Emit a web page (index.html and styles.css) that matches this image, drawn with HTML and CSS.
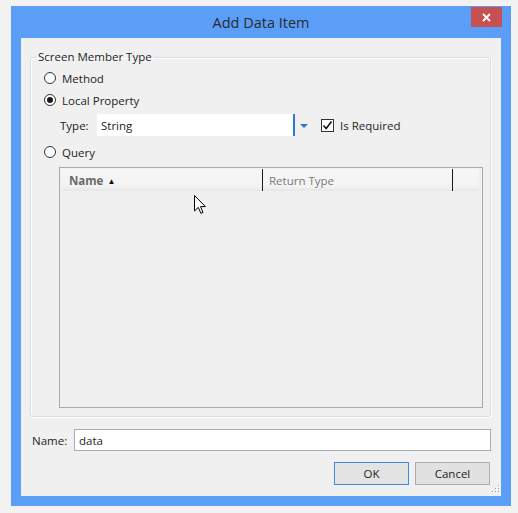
FILE: index.html
```html
<!DOCTYPE html>
<html lang="en">
<head>
  <meta charset="UTF-8">
  <title>Add Data Item</title>
  <link rel="stylesheet" href="styles.css">
</head>
<body>
  <div class="window">
    <div class="titlebar">
      <span class="title">Add Data Item</span>
      <div class="close">
        <svg width="9" height="9" viewBox="0 0 9 9"><path d="M1 1 L8 8 M8 1 L1 8" stroke="#fff" stroke-width="1.8"/></svg>
      </div>
    </div>

    <div class="client">
      <fieldset class="group">
        <legend>Screen Member Type</legend>

        <div class="radio-row"><span class="radio"></span>Method</div>
        <div class="radio-row"><span class="radio checked"></span>Local Property</div>

        <div class="type-row">
          <span class="type-label">Type:</span>
          <div class="combo">
            <span class="combo-text">String</span>
            <span class="combo-btn">
              <svg width="8" height="4" viewBox="0 0 8 4"><path d="M0 0 L8 0 L4 4 Z" fill="#2a7ad0"/></svg>
            </span>
          </div>
          <span class="check">
            <svg width="11" height="11" viewBox="0 0 11 11"><path d="M1.5 5.5 L4.2 8.5 L9.5 1.5" fill="none" stroke="#111" stroke-width="1.6"/></svg>
          </span>
          <span>Is Required</span>
        </div>

        <div class="radio-row"><span class="radio"></span>Query</div>

        <div class="list">
          <div class="list-header">
            <div class="col col-name">Name <span class="sort">&#9650;</span></div>
            <div class="col col-type">Return Type</div>
          </div>
          <div class="list-body"></div>
          <!-- mouse pointer left in the shot -->
          <svg class="cursor" width="12" height="19" viewBox="0 0 12 19">
            <path d="M0.5 0.5 L0.5 16 L4.3 12.4 L6.9 18.3 L9 17.4 L6.5 11.6 L11.4 11.6 Z" fill="#fff" stroke="#000" stroke-width="1"/>
          </svg>
        </div>
      </fieldset>

      <div class="name-row">
        <span class="name-label">Name:</span>
        <div class="textbox">data</div>
      </div>

      <div class="buttons">
        <div class="btn btn-default">OK</div>
        <div class="btn">Cancel</div>
      </div>

      <svg class="grip" width="10" height="10" viewBox="0 0 10 10">
        <rect x="8" y="0" width="1" height="1" fill="#9a9a9a"/>
        <rect x="5" y="3" width="1" height="1" fill="#9a9a9a"/>
        <rect x="8" y="3" width="1" height="1" fill="#9a9a9a"/>
        <rect x="2" y="6" width="1" height="1" fill="#9a9a9a"/>
        <rect x="5" y="6" width="1" height="1" fill="#9a9a9a"/>
        <rect x="8" y="6" width="1" height="1" fill="#9a9a9a"/>
        <rect x="9" y="1" width="1" height="1" fill="#fff"/>
        <rect x="6" y="4" width="1" height="1" fill="#fff"/>
        <rect x="9" y="4" width="1" height="1" fill="#fff"/>
        <rect x="3" y="7" width="1" height="1" fill="#fff"/>
        <rect x="6" y="7" width="1" height="1" fill="#fff"/>
        <rect x="9" y="7" width="1" height="1" fill="#fff"/>
      </svg>
    </div>
  </div>
</body>
</html>
```

FILE: styles.css
```css
body {
  margin: 0;
  padding: 6px 0 0 11px;
  background: #f2f2f2;
  font-family: "Open Sans", "Noto Sans", sans-serif;
  font-size: 11.5px;
  color: #1e1e1e;
}
.window {
  width: 500px;
  height: 500px;
  box-sizing: border-box;
  background: #5b9ef8;
  padding: 0 10px 10px;
  display: flex;
  flex-direction: column;
}
.titlebar {
  position: relative;
  height: 32px;
  display: flex;
  align-items: center;
  justify-content: center;
}
.title {
  font-size: 14.5px;
  color: #2b2b2b;
}
.close {
  position: absolute;
  top: 1px;
  right: -1px;
  width: 31px;
  height: 20px;
  background: #c75050;
  display: flex;
  align-items: center;
  justify-content: center;
}
.client {
  position: relative;
  flex: 1;
  background: #f0f0f0;
  padding: 11px 0 0;
  display: flex;
  flex-direction: column;
}
.group {
  margin: 0 10px 0 9px;
  padding: 2px 7px 8px 0;
  border: 1px solid #d5dfe5;
  border-radius: 3px;
  box-shadow: inset 1px 1px 0 #fff, 1px 1px 0 #fff;
  min-width: 0;
}
.group legend {
  margin-left: 5px;
  padding: 0 2px;
  line-height: 16px;
}
.radio-row {
  height: 22px;
  display: flex;
  align-items: center;
  padding-left: 13px;
  gap: 6px;
}
.radio {
  width: 10px;
  height: 10px;
  border: 1px solid #333;
  border-radius: 50%;
  background: #fff;
  display: flex;
  align-items: center;
  justify-content: center;
}
.radio.checked::after {
  content: "";
  width: 6px;
  height: 6px;
  border-radius: 50%;
  background: #1a1a1a;
}
.type-row {
  display: flex;
  align-items: center;
  height: 22px;
  margin: 3px 0 5px;
  padding-left: 29px;
}
.type-label {
  width: 37px;
}
.combo {
  display: flex;
  height: 22px;
}
.combo-text {
  width: 192px;
  background: #fff;
  border-right: 2px solid #2a7ad0;
  padding-left: 4px;
  display: flex;
  align-items: center;
}
.combo-btn {
  width: 17px;
  display: flex;
  align-items: center;
  justify-content: center;
  padding-top: 1px;
}
.check {
  width: 11px;
  height: 11px;
  margin: 0 6px 0 9px;
  border: 1px solid #333;
  background: #fff;
  display: flex;
}
.list {
  position: relative;
  margin: 4px 0 0 28px;
  height: 241px;
  box-sizing: border-box;
  border: 1px solid #a9a9a9;
  padding: 1px 3px 0 1px;
  display: flex;
  flex-direction: column;
}
.list-header {
  display: flex;
  height: 22px;
  background: linear-gradient(#f7f7f7, #f3f3f3 80%, #e6e6e6);
}
.col {
  display: flex;
  align-items: center;
  border-right: 1px solid #1a1a1a;
  color: #7a7a7a;
}
.col-name {
  width: 193px;
  padding-left: 8px;
  font-weight: bold;
  color: #6a6a6a;
}
.col-name .sort {
  font-size: 8px;
  margin-left: 4px;
  color: #111;
}
.col-type {
  width: 183px;
  padding-left: 6px;
}
.list-body {
  flex: 1;
}
.cursor {
  position: absolute;
  left: 134px;
  top: 27px;
}
.name-row {
  display: flex;
  align-items: center;
  margin: 12px 10px 0 11px;
}
.name-label {
  width: 42px;
}
.textbox {
  flex: 1;
  height: 22px;
  box-sizing: border-box;
  border: 1px solid #abadb3;
  background: #fff;
  padding-left: 4px;
  display: flex;
  align-items: center;
}
.buttons {
  display: flex;
  justify-content: flex-end;
  gap: 6px;
  margin: 11px 11px 0 0;
}
.btn {
  width: 75px;
  height: 23px;
  box-sizing: border-box;
  border: 1px solid #adadad;
  background: #e1e1e1;
  display: flex;
  align-items: center;
  justify-content: center;
}
.btn-default {
  border-color: #3c8bdc;
  background: #e3e3e3;
}
.grip {
  position: absolute;
  right: 1px;
  bottom: 1px;
}
```
